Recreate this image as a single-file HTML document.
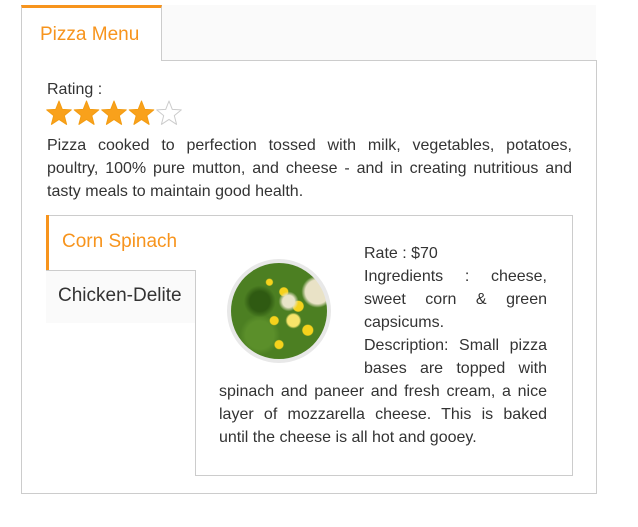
<!DOCTYPE html>
<html><head><meta charset="utf-8"><style>
body{margin:0;background:#fff;font-family:"Liberation Sans",sans-serif;color:#333;font-size:16px;letter-spacing:0}
.a{position:absolute}
.j{text-align:justify;text-align-last:justify;white-space:nowrap;height:23px;line-height:23px}
.l{height:23px;line-height:23px;white-space:nowrap}
</style></head><body>
<div class="a" style="left:162px;top:5px;width:434px;height:55px;background:#fafafa;border-bottom:1px solid #ccc"></div>
<div class="a" style="left:21px;top:5px;width:141px;height:56px;background:#fff;border-top:3px solid #f7941d;border-right:1px solid #ccc;border-left:1px solid #ccc;box-sizing:border-box"></div>
<div class="a" style="left:40px;top:24px;color:#f7941d;font-size:19px">Pizza Menu</div>
<div class="a" style="left:21px;top:60px;width:576px;height:434px;border:1px solid #ccc;border-top:none;box-sizing:border-box"></div>
<div class="a l" style="left:47px;top:78px">Rating :</div>
<svg class="a" style="left:46px;top:100px" width="140" height="27" viewBox="0 0 140 27">
<g stroke-linejoin="round">
<path d="M13 1 L16.3 9.4 L25.3 9.9 L18.3 15.6 L20.6 24.4 L13 19.4 L5.4 24.4 L7.7 15.6 L0.7 9.9 L9.7 9.4Z" fill="#f9a11b" stroke="#f39c12"/>
<path d="M13 1 L16.3 9.4 L25.3 9.9 L18.3 15.6 L20.6 24.4 L13 19.4 L5.4 24.4 L7.7 15.6 L0.7 9.9 L9.7 9.4Z" transform="translate(27.5 0)" fill="#f9a11b" stroke="#f39c12"/>
<path d="M13 1 L16.3 9.4 L25.3 9.9 L18.3 15.6 L20.6 24.4 L13 19.4 L5.4 24.4 L7.7 15.6 L0.7 9.9 L9.7 9.4Z" transform="translate(55 0)" fill="#f9a11b" stroke="#f39c12"/>
<path d="M13 1 L16.3 9.4 L25.3 9.9 L18.3 15.6 L20.6 24.4 L13 19.4 L5.4 24.4 L7.7 15.6 L0.7 9.9 L9.7 9.4Z" transform="translate(82.5 0)" fill="#f9a11b" stroke="#f39c12"/>
<path d="M13 1 L16.3 9.4 L25.3 9.9 L18.3 15.6 L20.6 24.4 L13 19.4 L5.4 24.4 L7.7 15.6 L0.7 9.9 L9.7 9.4Z" transform="translate(110 0)" fill="#fff" stroke="#ccc"/>
</g></svg>
<div class="a" style="left:47px;top:134px;width:525px">
<div class="j">Pizza cooked to perfection tossed with milk, vegetables, potatoes,</div>
<div class="j">poultry, 100% pure mutton, and cheese - and in creating nutritious and</div>
<div class="l">tasty meals to maintain good health.</div>
</div>
<div class="a" style="left:46px;top:215px;width:527px;height:1px;background:#ccc"></div>
<div class="a" style="left:572px;top:215px;width:1px;height:261px;background:#ccc"></div>
<div class="a" style="left:195px;top:475px;width:378px;height:1px;background:#ccc"></div>
<div class="a" style="left:46px;top:215px;width:3px;height:55px;background:#f7941d"></div>
<div class="a" style="left:62px;top:231px;color:#f7941d;font-size:19px">Corn Spinach</div>
<div class="a" style="left:46px;top:270px;width:150px;height:53px;background:#fafafa;border-top:1px solid #ccc;border-right:1px solid #ccc;box-sizing:border-box"></div>
<div class="a" style="left:58px;top:285px;font-size:19px;color:#333">Chicken-Delite</div>
<div class="a" style="left:195px;top:270px;width:1px;height:206px;background:#ccc"></div>
<div class="a" style="left:227px;top:259px;width:104px;height:104px;border-radius:50%;background:#e8e8e8"></div>
<div class="a" style="left:231px;top:263px;width:96px;height:96px;border-radius:50%;background:
radial-gradient(circle at 60% 40%,#e8e4c8 0 6px,transparent 10px),
radial-gradient(circle at 55% 30%,#f5d21c 0 4px,transparent 5px),
radial-gradient(circle at 70% 45%,#f5d21c 0 5px,transparent 6px),
radial-gradient(circle at 45% 60%,#f5d21c 0 4px,transparent 5px),
radial-gradient(circle at 80% 70%,#f5d21c 0 5px,transparent 6px),
radial-gradient(circle at 50% 85%,#f5d21c 0 4px,transparent 5px),
radial-gradient(circle at 65% 60%,#f7e46a 0 6px,transparent 8px),
radial-gradient(circle at 40% 20%,#f5d21c 0 3px,transparent 4px),
radial-gradient(circle at 90% 30%,#e9e2c6 0 12px,transparent 16px),
radial-gradient(circle at 30% 40%,#2f5a12 0 10px,transparent 16px),
radial-gradient(circle at 30% 75%,#5b8f2a 0 14px,transparent 20px),
#4c7f22"></div>
<div class="a" style="left:364px;top:242px;width:183px">
<div class="l">Rate : $70</div>
<div class="j">Ingredients : cheese,</div>
<div class="j">sweet corn &amp; green</div>
<div class="l">capsicums.</div>
<div class="j">Description: Small pizza</div>
<div class="j">bases are topped with</div>
</div>
<div class="a" style="left:219px;top:380px;width:328px">
<div class="j">spinach and paneer and fresh cream, a nice</div>
<div class="j">layer of mozzarella cheese. This is baked</div>
<div class="l">until the cheese is all hot and gooey.</div>
</div>
</body></html>
